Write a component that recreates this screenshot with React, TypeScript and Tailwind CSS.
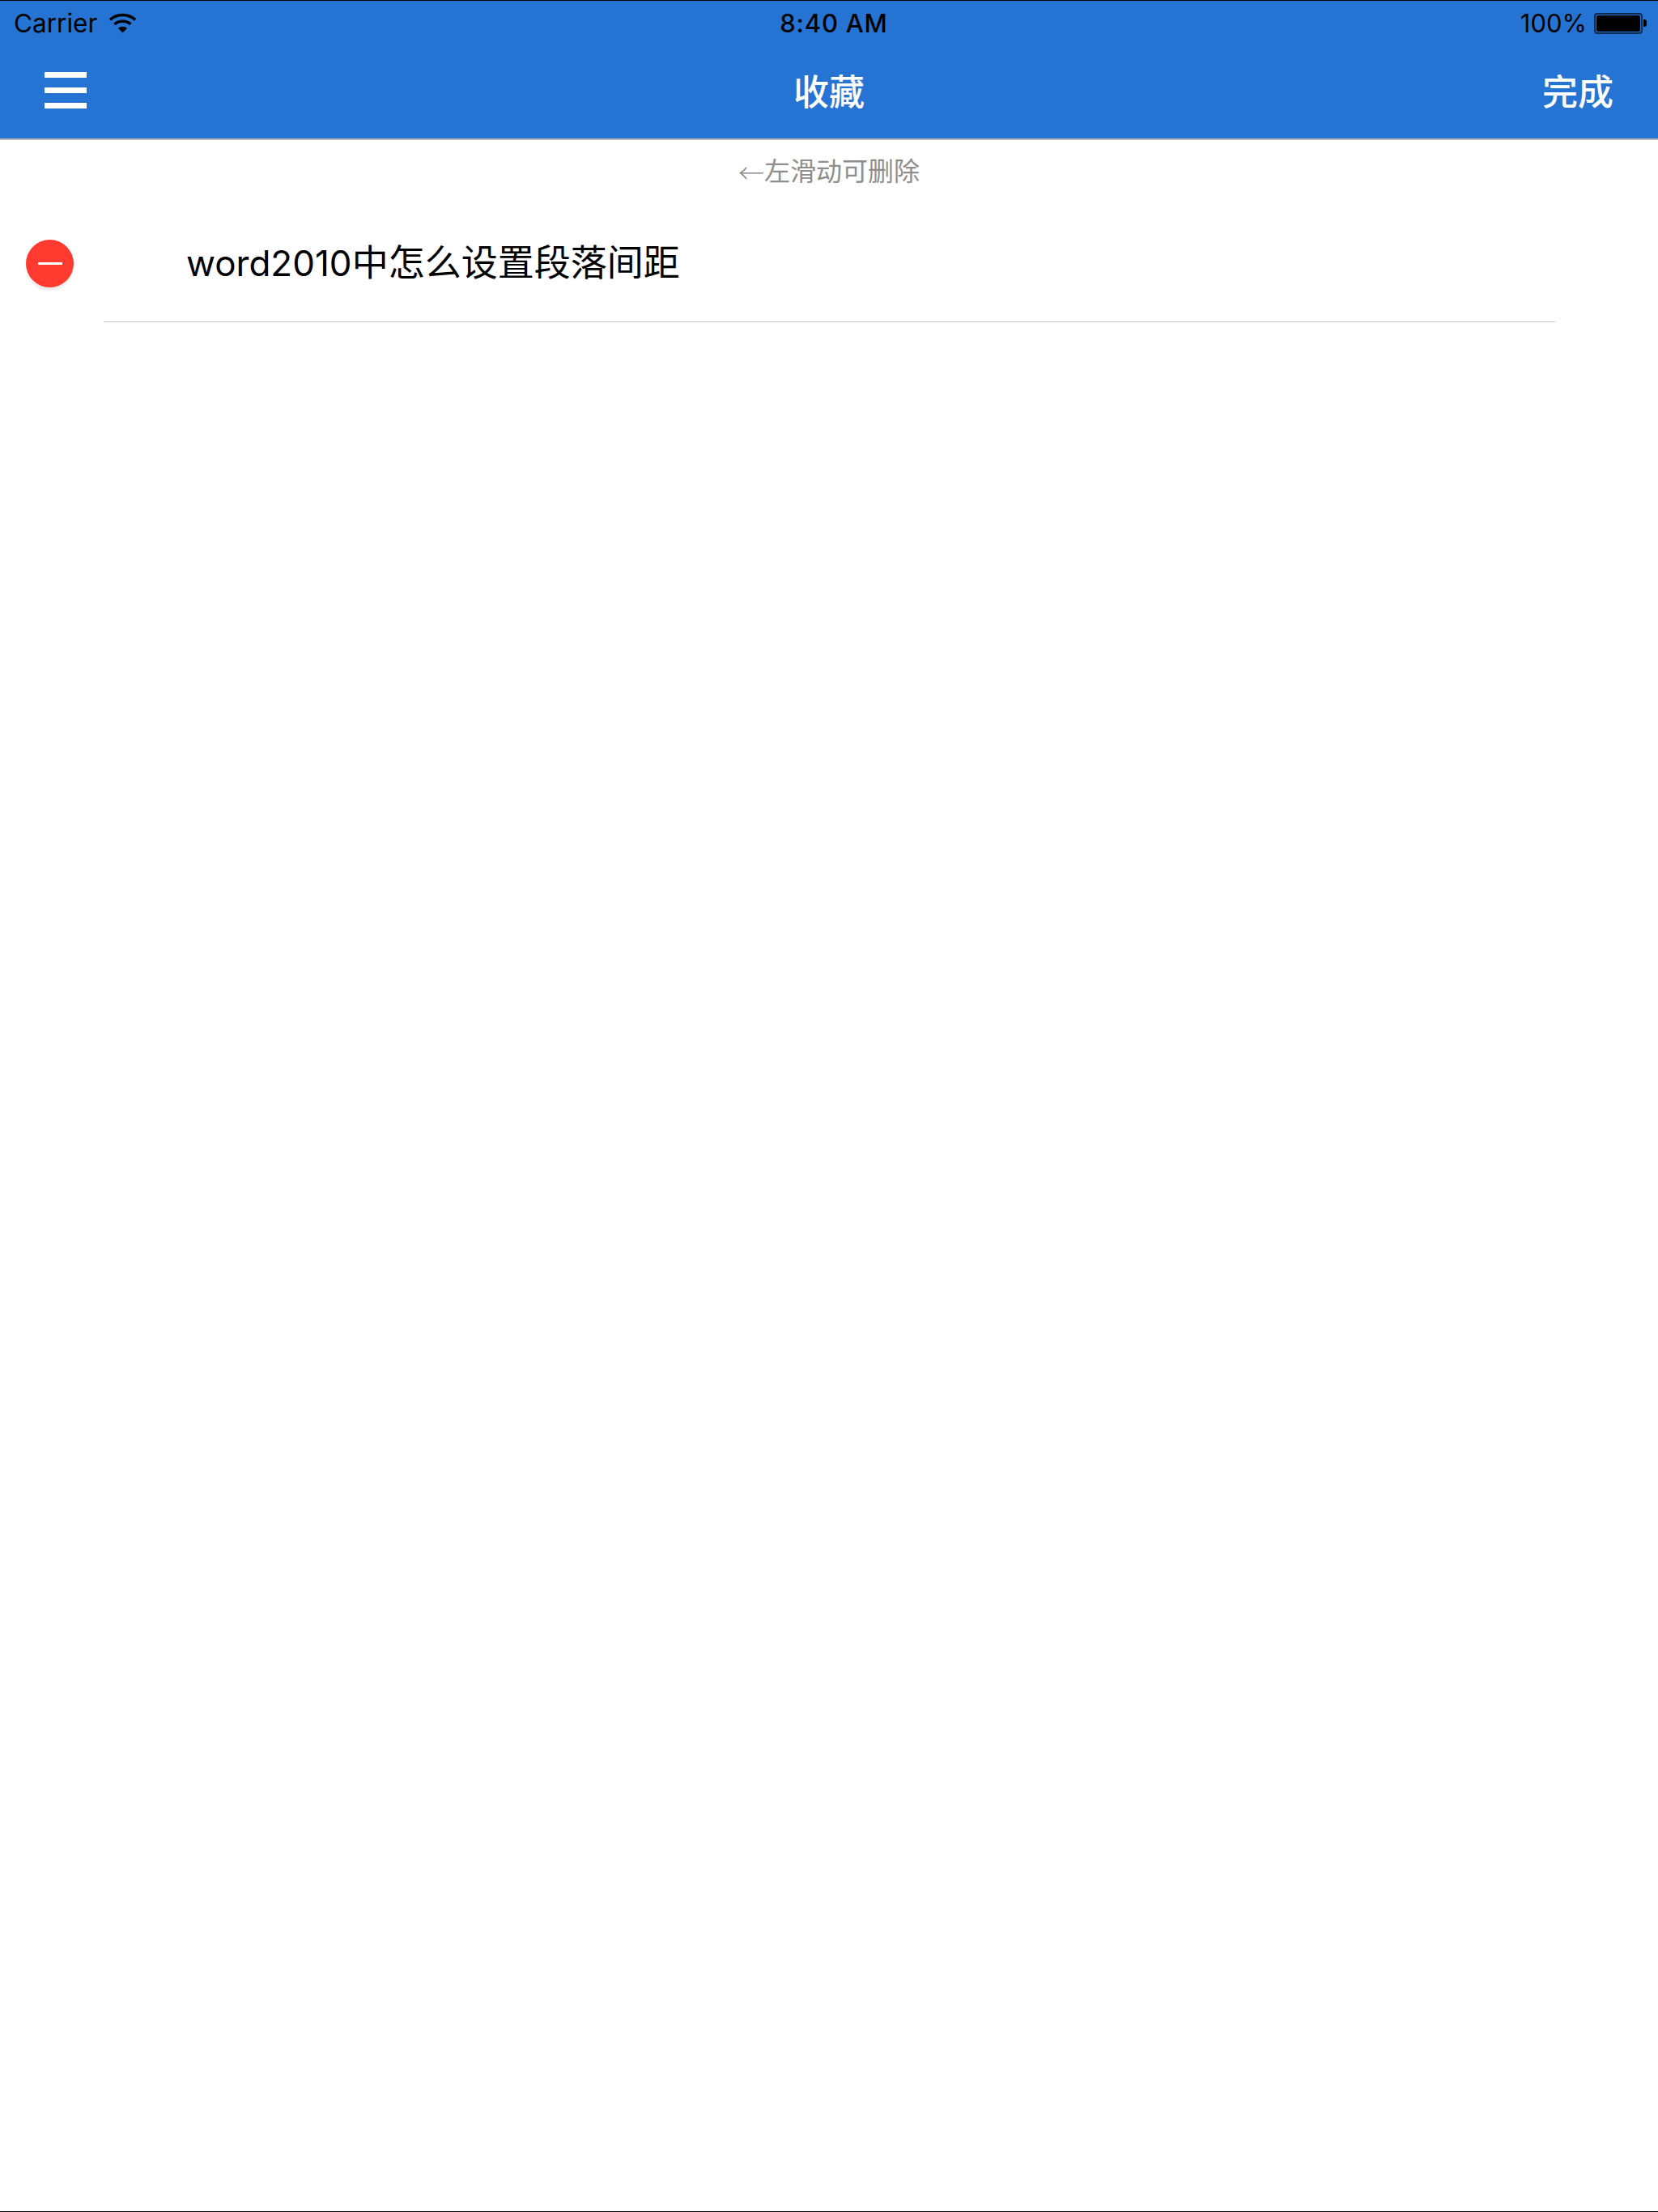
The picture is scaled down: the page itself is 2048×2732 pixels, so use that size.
import React from 'react';

const sans = 'font-["Inter","Noto_Sans_CJK_SC",sans-serif]';

function WifiIcon() {
  return (
    <svg width="33" height="25" viewBox="0 0 33 25" className="ml-[15px]">
      <path d="M1 8.500C9.500 0.500 23.500 0.500 32 8.500" fill="none" stroke="#000" strokeWidth="3.4" />
      <path d="M6.500 14C12 9 21 9 26.500 14" fill="none" stroke="#000" strokeWidth="3.4" />
      <path d="M11 19C14 16 19 16 22 19L16.500 24.500Z" fill="#000" />
    </svg>
  );
}

function BatteryIcon() {
  return (
    <div className="flex items-center ml-[9px]">
      <div className="w-[60px] h-[26px] rounded-[4px] border-2 border-[#0d2a50] p-[1px]">
        <div className="w-full h-full bg-black rounded-[2px]" />
      </div>
      <div className="w-[4px] h-[9px] bg-black rounded-r-[3px] ml-[1px]" />
    </div>
  );
}

export default function App() {
  return (
    <div className={`w-[2048px] h-[2732px] bg-white flex flex-col border-t border-b border-black ${sans}`}>
      {/* Header */}
      <div className="h-[170px] bg-[#2574d3] border-b-2 border-[#b4b6b8] box-content shrink-0">
        <div className="h-[55px] relative flex items-center justify-between pl-[17px] pr-[14px]">
          <div className="flex items-center">
            <span className="text-[31.5px] leading-none text-black">Carrier</span>
            <WifiIcon />
          </div>
          <span className="absolute left-[12px] right-0 text-center text-[31px] tracking-[0.8px] leading-none font-medium text-black">8:40 AM</span>
          <div className="flex items-center">
            <span className="text-[31px] leading-none text-black">100%</span>
            <BatteryIcon />
          </div>
        </div>
        <div className="h-[115px] relative flex items-center justify-between pl-[55px] pr-[55px]">
          <div className="flex flex-col gap-[12px] pb-[4px]">
            <div className="w-[52px] h-[7px] bg-white" />
            <div className="w-[52px] h-[7px] bg-white" />
            <div className="w-[52px] h-[7px] bg-white" />
          </div>
          <span className="absolute left-0 right-0 text-center text-[44px] leading-none text-white font-medium">收藏</span>
          <span className="text-[44px] leading-none text-white font-medium">完成</span>
        </div>
      </div>

      {/* Hint */}
      <div className="h-[78px] flex items-center justify-center text-[32px] leading-none text-[#8e8e8e] shrink-0">
        <span className='font-["Noto_Sans_CJK_SC"] font-light'>←</span>左滑动可删除
      </div>

      {/* Favorite row */}
      <div className="h-[147px] relative ml-[128px] mr-[127px] border-b border-[#c6c6c6] flex items-center pl-[102px] shrink-0">
        <div className="absolute left-[-96px] top-[45px] w-[59px] h-[59px] rounded-full bg-[#ff3b30] shadow-[0_4px_3px_rgba(0,0,0,0.08)] flex items-center justify-center">
          <div className="w-[30px] h-[3px] bg-white" />
        </div>
        <span className="text-[44px] leading-none text-black">
          word2010<span className="text-[45px]">中怎么设置段落间距</span>
        </span>
      </div>
    </div>
  );
}
